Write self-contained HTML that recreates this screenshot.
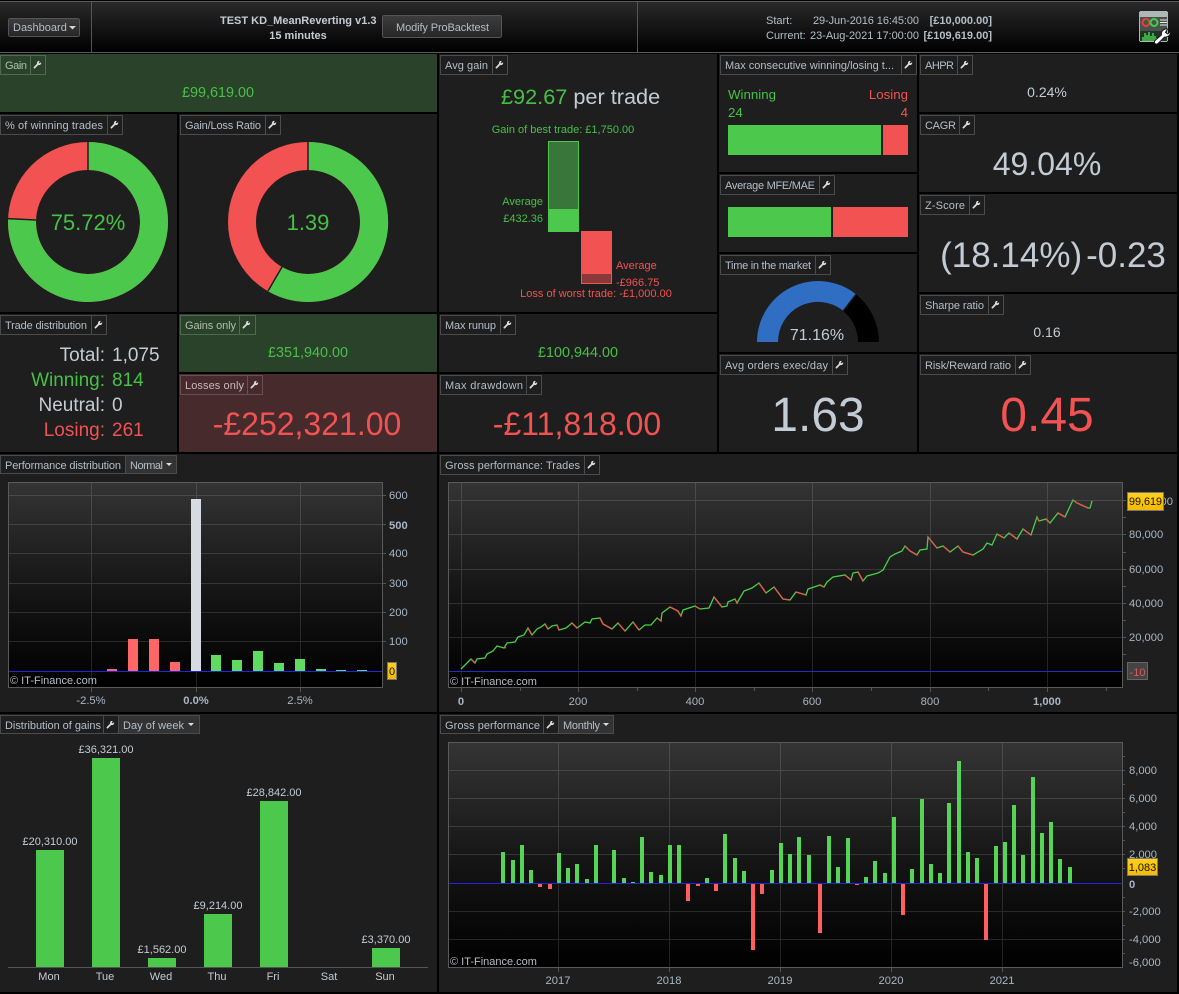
<!DOCTYPE html>
<html><head><meta charset="utf-8"><title>ProBacktest Dashboard</title>
<style>
html,body{margin:0;padding:0;background:#000;width:1179px;height:994px;overflow:hidden}
svg{display:block;font-family:"Liberation Sans",Arial,sans-serif}
.t{font-size:11px;fill:#b4bec8}
.tg{font-size:11px;fill:#aebfae}
.tr{font-size:11px;fill:#c8b8b8}
.ax{font-size:11.2px;fill:#a9b6c4}
.g{fill:#46c146}.r{fill:#f25252}.w{fill:#c3ccd4}
.m{text-anchor:middle}.e{text-anchor:end}
.tb{fill:none;stroke:#4b4b4b}
.tbg{fill:none;stroke:#4f6b4f}
.tbr{fill:none;stroke:#6a4e50}
.gl{stroke:rgba(255,255,255,.13);stroke-width:1;shape-rendering:crispEdges}
.pb{fill:url(#plot);stroke:#5a5a5a;shape-rendering:crispEdges}
.tick{stroke:#555;shape-rendering:crispEdges}
rect{shape-rendering:crispEdges}
</style></head><body>
<svg width="1179" height="994" viewBox="0 0 1179 994" xmlns="http://www.w3.org/2000/svg">
<defs>
<linearGradient id="hd" x1="0" y1="0" x2="0" y2="1"><stop offset="0" stop-color="#2a2a2a"/><stop offset="1" stop-color="#000"/></linearGradient>
<linearGradient id="plot" x1="0" y1="0" x2="0" y2="1"><stop offset="0" stop-color="#343434"/><stop offset=".55" stop-color="#141414"/><stop offset="1" stop-color="#000"/></linearGradient>
<linearGradient id="btn" x1="0" y1="0" x2="0" y2="1"><stop offset="0" stop-color="#3d3d3d"/><stop offset="1" stop-color="#262626"/></linearGradient>
<linearGradient id="ylw" x1="0" y1="0" x2="0" y2="1"><stop offset="0" stop-color="#ffd21a"/><stop offset="1" stop-color="#f5b800"/></linearGradient>
<symbol id="wr" viewBox="0 -3 15 15" overflow="visible"><path d="M11 2.600 L9.200 4.300 L7.700 3 L9.400 1.100 A3.100 3.100 0 0 0 5.400 4.900 L1.100 9.200 A1.100 1.100 0 0 0 2.800 10.900 L7.100 6.600 A3.100 3.100 0 0 0 11 2.600 Z" fill="#dcdcdc"/></symbol>
</defs>

<rect width="1179" height="994" fill="#000"/>
<!-- header -->
<rect y="1" width="1179" height="51" fill="url(#hd)"/>
<rect y="1" width="1179" height="1" fill="#5c5c5c"/>
<rect y="52" width="1179" height="1" fill="#5c5c5c"/>
<rect x="91" y="2" width="1" height="50" fill="#555"/>
<rect x="637" y="2" width="1" height="50" fill="#555"/>
<rect x="8.500" y="18.500" width="71" height="18" rx="2" fill="url(#btn)" stroke="#555"/>
<text x="13" y="31" class="t">Dashboard</text>
<path d="M69 26h7l-3.500 3.500z" fill="#d5d5d5"/>
<text x="220" y="24" font-size="11" font-weight="bold" fill="#c3ccd4">TEST KD_MeanReverting v1.3</text>
<text x="298" y="39" font-size="11" font-weight="bold" fill="#c3ccd4" class="m">15 minutes</text>
<rect x="382.500" y="15.500" width="119" height="22" rx="2" fill="url(#btn)" stroke="#555"/>
<text x="396" y="31" class="t" textLength="93" lengthAdjust="spacing">Modify ProBacktest</text>
<text x="766" y="24" class="t">Start:</text>
<text x="813" y="24" class="t" textLength="106" lengthAdjust="spacing">29-Jun-2016 16:45:00</text>
<text x="992" y="24" class="t e" font-weight="bold">[£10,000.00]</text>
<text x="766" y="39" class="t">Current:</text>
<text x="810" y="39" class="t" textLength="109" lengthAdjust="spacing">23-Aug-2021 17:00:00</text>
<text x="992" y="39" class="t e" font-weight="bold">[£109,619.00]</text>
<!-- header icon -->
<rect x="1139" y="11" width="29" height="31" rx="2" fill="#aeb6b6"/>
<rect x="1140" y="17" width="27" height="24" fill="#4a524e"/>
<rect x="1140" y="31" width="27" height="10" fill="#22352a"/>
<circle cx="1146" cy="22.500" r="3.500" fill="none" stroke="#e6403c" stroke-width="2"/>
<circle cx="1154" cy="22.500" r="3.500" fill="none" stroke="#3fd04a" stroke-width="2"/>
<path d="M1160 20h7M1160 22.500h7M1160 25h7" stroke="#e6ebeb"/>
<path d="M1143 41v-4M1145 41v-8M1147 41v-6M1149 41v-9M1151 41v-5M1153 41v-8M1155 41v-5M1157 41v-3" stroke="#46d04a" stroke-width="1.500"/>
<path d="M1170.500 31.500 L1167.800 34 L1165.500 32.500 L1167.500 29 A5 5 0 0 0 1161.500 35 L1155 40.500 A2 2 0 0 0 1158 43.500 L1164.500 37 A5 5 0 0 0 1170.500 31.500 Z" fill="#fff" stroke="#1a1a1a"/>

<!-- panels -->
<g fill="#1e1e1e">
<rect x="0" y="54" width="437" height="58" fill="#2a412a"/>
<rect x="0" y="114" width="177" height="198"/>
<rect x="179" y="114" width="258" height="198"/>
<rect x="439" y="54" width="278" height="258"/>
<rect x="719" y="54" width="198" height="118"/>
<rect x="919" y="54" width="258" height="58"/>
<rect x="919" y="114" width="258" height="78"/>
<rect x="919" y="194" width="258" height="98"/>
<rect x="919" y="294" width="258" height="58"/>
<rect x="719" y="174" width="198" height="78"/>
<rect x="719" y="254" width="198" height="98"/>
<rect x="719" y="354" width="198" height="98"/>
<rect x="919" y="354" width="258" height="98"/>
<rect x="0" y="314" width="177" height="138"/>
<rect x="179" y="314" width="258" height="58" fill="#2a412a"/>
<rect x="179" y="374" width="258" height="78" fill="#462a2c"/>
<rect x="439" y="314" width="278" height="58"/>
<rect x="439" y="374" width="278" height="78"/>
<rect x="0" y="454" width="437" height="258"/>
<rect x="439" y="454" width="738" height="258"/>
<rect x="0" y="714" width="437" height="278"/>
<rect x="439" y="714" width="738" height="278"/>
</g>

<!-- tabs -->
<g>
<path class="tbg" d="M.5 55.500H45.500V74.500H.5ZM30.500 55V74"/><text x="5" y="69" class="tg" textLength="22" lengthAdjust="spacing">Gain</text><use href="#wr" x="33" y="58" width="11" height="11"/>
<path class="tb" d="M.5 115.500H122.500V134.500H.5ZM107.500 115V134"/><text x="5" y="129" class="t" textLength="98" lengthAdjust="spacing">% of winning trades</text><use href="#wr" x="110" y="118" width="11" height="11"/>
<path class="tb" d="M180.500 115.500H280.500V134.500H180.500ZM265.500 115V134"/><text x="185" y="129" class="t" textLength="76" lengthAdjust="spacing">Gain/Loss Ratio</text><use href="#wr" x="268" y="118" width="11" height="11"/>
<path class="tb" d="M440.500 55.500H507.500V74.500H440.500ZM492.500 55V74"/><text x="445" y="69" class="t" textLength="43" lengthAdjust="spacing">Avg gain</text><use href="#wr" x="495" y="58" width="11" height="11"/>
<path class="tb" d="M720.500 55.500H916.500V74.500H720.500ZM901.500 55V74"/><text x="725" y="69" class="t" textLength="169" lengthAdjust="spacing">Max consecutive winning/losing t...</text><use href="#wr" x="904" y="58" width="11" height="11"/>
<path class="tb" d="M920.500 55.500H972.500V74.500H920.500ZM957.500 55V74"/><text x="925" y="69" class="t" textLength="29" lengthAdjust="spacing">AHPR</text><use href="#wr" x="960" y="58" width="11" height="11"/>
<path class="tb" d="M920.500 115.500H974.500V134.500H920.500ZM959.500 115V134"/><text x="925" y="129" class="t" textLength="31" lengthAdjust="spacing">CAGR</text><use href="#wr" x="962" y="118" width="11" height="11"/>
<path class="tb" d="M920.500 195.500H984.500V214.500H920.500ZM969.500 195V214"/><text x="925" y="209" class="t" textLength="40" lengthAdjust="spacing">Z-Score</text><use href="#wr" x="972" y="198" width="11" height="11"/>
<path class="tb" d="M920.500 295.500H1003.500V314.500H920.500ZM988.500 295V314"/><text x="925" y="309" class="t" textLength="59" lengthAdjust="spacing">Sharpe ratio</text><use href="#wr" x="991" y="298" width="11" height="11"/>
<path class="tb" d="M720.500 175.500H834.500V194.500H720.500ZM819.500 175V194"/><text x="725" y="189" class="t" textLength="90" lengthAdjust="spacing">Average MFE/MAE</text><use href="#wr" x="822" y="178" width="11" height="11"/>
<path class="tb" d="M720.500 255.500H830.500V274.500H720.500ZM815.500 255V274"/><text x="725" y="269" class="t" textLength="86" lengthAdjust="spacing">Time in the market</text><use href="#wr" x="818" y="258" width="11" height="11"/>
<path class="tb" d="M720.500 355.500H847.500V374.500H720.500ZM832.500 355V374"/><text x="725" y="369" class="t" textLength="103" lengthAdjust="spacing">Avg orders exec/day</text><use href="#wr" x="835" y="358" width="11" height="11"/>
<path class="tb" d="M920.500 355.500H1030.500V374.500H920.500ZM1015.500 355V374"/><text x="925" y="369" class="t" textLength="86" lengthAdjust="spacing">Risk/Reward ratio</text><use href="#wr" x="1018" y="358" width="11" height="11"/>
<path class="tb" d="M.5 315.500H106.500V334.500H.5ZM91.500 315V334"/><text x="5" y="329" class="t" textLength="82" lengthAdjust="spacing">Trade distribution</text><use href="#wr" x="94" y="318" width="11" height="11"/>
<path class="tbg" d="M180.500 315.500H255.500V334.500H180.500ZM239.500 315V334"/><text x="185" y="329" class="tg" textLength="51" lengthAdjust="spacing">Gains only</text><use href="#wr" x="242" y="318" width="11" height="11"/>
<path class="tbr" d="M180.500 375.500H262.500V394.500H180.500ZM247.500 375V394"/><text x="185" y="389" class="tr" textLength="59" lengthAdjust="spacing">Losses only</text><use href="#wr" x="250" y="378" width="11" height="11"/>
<path class="tb" d="M440.500 315.500H515.500V334.500H440.500ZM500.500 315V334"/><text x="445" y="329" class="t" textLength="51" lengthAdjust="spacing">Max runup</text><use href="#wr" x="503" y="318" width="11" height="11"/>
<path class="tb" d="M440.500 375.500H541.500V394.500H440.500ZM526.500 375V394"/><text x="445" y="389" class="t" textLength="78" lengthAdjust="spacing">Max drawdown</text><use href="#wr" x="529" y="378" width="11" height="11"/>
<rect x="125" y="455" width="51" height="19" fill="#333"/>
<path class="tb" d="M.5 455.500H176.500V473.500H.5ZM125.500 455V474"/><text x="5" y="469" class="t" textLength="116" lengthAdjust="spacing">Performance distribution</text><text x="130" y="469" class="t" textLength="33" lengthAdjust="spacing">Normal</text><path d="M166 463h6l-3 3z" fill="#ddd"/>
<path class="tb" d="M440.500 455.500H599.500V474.500H440.500ZM584.500 455V474"/><text x="445" y="469" class="t" textLength="135" lengthAdjust="spacing">Gross performance: Trades</text><use href="#wr" x="587" y="458" width="11" height="11"/>
<rect x="118" y="715" width="81" height="19" fill="#333"/>
<path class="tb" d="M.5 715.500H199.500V733.500H.5ZM103.500 715V734M118.500 715V734"/><text x="5" y="729" class="t" textLength="96" lengthAdjust="spacing">Distribution of gains</text><use href="#wr" x="106" y="718" width="11" height="11"/><text x="123" y="729" class="t" textLength="61" lengthAdjust="spacing">Day of week</text><path d="M188 723h6l-3 3z" fill="#ddd"/>
<rect x="559" y="715" width="54" height="19" fill="#333"/>
<path class="tb" d="M440.500 715.500H613.500V733.500H440.500ZM543.500 715V734M558.500 715V734"/><text x="445" y="729" class="t" textLength="95" lengthAdjust="spacing">Gross performance</text><use href="#wr" x="546" y="718" width="11" height="11"/><text x="563" y="729" class="t" textLength="37" lengthAdjust="spacing">Monthly</text><path d="M603 723h6l-3 3z" fill="#ddd"/>
</g>

<!-- values -->
<text x="218" y="97" font-size="14.400" class="g m">£99,619.00</text>
<text x="501" y="104" font-size="21.700" class="g">£92.67<tspan class="w"> per trade</tspan></text>
<text x="1047" y="97" font-size="14" class="w m">0.24%</text>
<text x="1047" y="175" font-size="32" class="w m">49.04%</text>
<text x="1053" y="267" font-size="35" class="w m">(18.14%)<tspan dx="4">-0.23</tspan></text>
<text x="1047" y="337" font-size="14" class="w m">0.16</text>
<text x="818" y="431" font-size="48" class="w m">1.63</text>
<text x="1047" y="431" font-size="48" class="r m">0.45</text>
<text x="308" y="357" font-size="14.400" class="g m">£351,940.00</text>
<text x="307" y="435" font-size="32" class="r m">-£252,321.00</text>
<text x="578" y="357" font-size="14.400" class="g m">£100,944.00</text>
<text x="577" y="435" font-size="32" class="r m">-£11,818.00</text>

<!-- max consecutive -->
<text x="728" y="99" font-size="13.300" class="g">Winning</text>
<text x="908" y="99" font-size="13.300" class="r e">Losing</text>
<text x="728" y="117" font-size="13.300" class="g">24</text>
<text x="908" y="117" font-size="13.300" class="r e">4</text>
<rect x="728" y="125" width="153" height="30" fill="#4cc94c"/>
<rect x="883" y="125" width="25" height="30" fill="#f25252"/>
<!-- MFE -->
<rect x="728" y="207" width="103" height="30" fill="#4cc94c"/>
<rect x="833" y="207" width="75" height="30" fill="#f25252"/>

<!-- avg gain bars -->
<text x="563" y="133" font-size="11" class="g m">Gain of best trade: £1,750.00</text>
<rect x="548" y="141" width="31" height="91" fill="#4cc94c"/>
<rect x="549" y="142" width="29" height="67" fill="#38763a"/>
<text x="543" y="205" font-size="11" class="g e">Average</text>
<text x="543" y="222" font-size="11" class="g e">£432.36</text>
<rect x="581" y="231" width="31" height="53" fill="#f25252"/>
<rect x="582" y="274" width="29" height="9" fill="#8a3939"/>
<text x="616" y="269" font-size="11" class="r">Average</text>
<text x="616" y="286" font-size="11" class="r">-£966.75</text>
<text x="596" y="297" font-size="11" class="r m">Loss of worst trade: -£1,000.00</text>

<!-- donuts -->
<g fill="none">
<circle cx="88" cy="222" r="66" stroke="#f25252" stroke-width="28"/>
<path d="M88 156 A66 66 0 1 1 22.100 219" stroke="#4cc94c" stroke-width="28"/>
<path d="M88 141V171M8 218.600L36 220" stroke="#1e1e1e" stroke-width="1.500"/>
<circle cx="308" cy="222" r="66" stroke="#f25252" stroke-width="28"/>
<path d="M308 156 A66 66 0 1 1 274.900 279" stroke="#4cc94c" stroke-width="28"/>
<path d="M308 141V171M282 267L268 291" stroke="#1e1e1e" stroke-width="1.500"/>
</g>
<text x="88" y="230" font-size="22" class="g m">75.72%</text>
<text x="308" y="230" font-size="22" class="g m">1.39</text>

<!-- gauge -->
<path d="M757 342 A61 61 0 0 1 855.500 293.900 L842.700 310.400 A40 40 0 0 0 778 342 Z" fill="#2f6ec3"/>
<path d="M856.300 294.600 A61 61 0 0 1 879 342 H858 A40 40 0 0 0 843.500 311.200 Z" fill="#000"/>
<text x="817" y="340" font-size="16" class="w m">71.16%</text>

<!-- trade distribution -->
<g font-size="19">
<text x="105" y="361" class="w e">Total:</text><text x="112" y="361" class="w">1,075</text>
<text x="105" y="386" class="g e">Winning:</text><text x="112" y="386" class="g">814</text>
<text x="105" y="411" class="w e">Neutral:</text><text x="112" y="411" class="w">0</text>
<text x="105" y="436" class="r e">Losing:</text><text x="112" y="436" class="r">261</text>
</g>

<!-- performance distribution chart -->
<rect class="pb" x="8.500" y="482.500" width="374" height="205"/>
<path class="gl" d="M9 495.500H382M9 524.500H382M9 553.500H382M9 583.500H382M9 612.500H382M9 641.500H382M91.500 483V687M196.500 483V687M300.500 483V687"/>
<path class="tick" d="M91.500 687V692M196.500 687V692M300.500 687V692M383 495.500H386M383 524.500H386M383 553.500H386M383 583.500H386M383 612.500H386M383 641.500H386"/>
<g fill="#ff6666">
<rect x="107" y="669" width="10" height="2"/><rect x="128" y="639" width="10" height="32"/><rect x="149" y="639" width="10" height="32"/><rect x="170" y="662" width="10" height="9"/>
</g>
<rect x="191" y="499" width="10" height="172" fill="#d6dbe1"/>
<g fill="#5fdc5f">
<rect x="211" y="655" width="10" height="16"/><rect x="232" y="660" width="10" height="11"/><rect x="253" y="651" width="10" height="20"/><rect x="274" y="663" width="10" height="8"/><rect x="295" y="659" width="10" height="12"/><rect x="316" y="669" width="10" height="2"/><rect x="336" y="670" width="10" height="1"/><rect x="357" y="670" width="10" height="1"/>
</g>
<rect x="9" y="671" width="373" height="1" fill="#2424e0"/>
<text x="10" y="684" font-size="11" fill="#b8bfc6">© IT-Finance.com</text>
<g class="ax"><text x="389" y="499">600</text><text x="389" y="529" font-weight="bold">500</text><text x="389" y="557">400</text><text x="389" y="587">300</text><text x="389" y="616">200</text><text x="389" y="645">100</text>
<text x="91" y="704" class="m">-2.5%</text><text x="196" y="704" class="m" font-weight="bold">0.0%</text><text x="300" y="704" class="m">2.5%</text></g>
<rect x="387.500" y="662.500" width="9" height="17" fill="url(#ylw)" stroke="#777"/>
<text x="392" y="675" font-size="11" fill="#111" class="m">0</text>

<!-- gross perf trades chart -->
<rect class="pb" x="448.500" y="482.500" width="674" height="205"/>
<path class="gl" d="M449 500.500H1122M449 534.500H1122M449 569.500H1122M449 603.500H1122M449 637.500H1122M461.500 483V687M578.500 483V687M695.500 483V687M812.500 483V687M930.500 483V687M1047.500 483V687"/>
<path class="tick" d="M461.500 687V692M520.500 687V691M578.500 687V692M637.500 687V691M695.500 687V692M754.500 687V691M812.500 687V692M871.500 687V691M930.500 687V692M988.500 687V691M1047.500 687V692M1106.500 687V691M1123 500.500H1126M1123 517.500H1126M1123 534.500H1126M1123 552.500H1126M1123 569.500H1126M1123 586.500H1126M1123 603.500H1126M1123 620.500H1126M1123 637.500H1126M1123 654.500H1126"/>
<rect x="449" y="671" width="673" height="1" fill="#2828c8"/>
<polyline fill="none" stroke="#46d046" stroke-width="1.300" points="461,669 465,665 468,662 471,659 475,663 477,659 485,658 487,654 493,651 497,646 504,648 507,643 515,642 518,637 524,635 528,628 532,635 537,629 541,627 545,624 548,629 552,626 557,625 559,630 566,628 572,623 577,628 585,622 590,623 592,619 600,618 603,624 612,629 618,623 625,631 633,622 639,630 645,625 651,625 657,618 661,621 662,613 670,607 678,611 681,616 683,610 695,606 700,609 709,608 714,597 722,607 727,606 728,602 735,599 737,603 744,591 752,588 759,583 766,593 774,587 783,599 790,600 796,592 806,595 808,589 820,585 824,587 827,582 833,577 845,575 851,580 853,573 858,572 863,581 867,576 878,573 883,570 890,557 895,554 902,551 905,546 910,551 917,555 920,550 927,549 928,537 937,548 943,546 950,552 958,546 963,552 973,555 983,549 987,543 992,545 997,534 1004,538 1009,533 1017,539 1023,529 1031,535 1037,517 1039,521 1046,519 1050,523 1058,513 1065,517 1073,500 1077,503 1088,508 1090,508 1092,501"/>
<path fill="none" stroke="#e8584c" stroke-width="1.300" d="M471 659L475 663M504 647L506 648M528 628L532 635M545 624L548 629M557 625L559 630M572 623L577 628M600 618L603 624L612 629M618 623L625 631M633 622L639 630M657 618L661 621M670 607L678 611L681 616M695 606L700 609M714 597L722 607M735 599L737 603M759 583L766 593M774 587L783 599L790 600M796 592L806 595M820 585L824 587M845 575L851 580M858 572L863 581M905 546L910 551L917 555M928 537L937 548M943 546L950 552M958 546L963 552L973 555M997 534L1004 538M1009 533L1017 539M1023 529L1031 535M1037 517L1039 521M1046 519L1050 523M1058 513L1065 517M1073 500L1077 503L1088 508"/>
<text x="450" y="685" font-size="11" fill="#b8bfc6">© IT-Finance.com</text>
<g class="ax">
<text x="1173" y="505" text-anchor="end">00</text>
<text x="1129" y="538">80,000</text><text x="1129" y="573">60,000</text><text x="1129" y="607">40,000</text><text x="1129" y="641">20,000</text>
<text x="461" y="705" class="m" font-weight="bold">0</text><text x="578" y="705" class="m">200</text><text x="695" y="705" class="m">400</text><text x="812" y="705" class="m">600</text><text x="930" y="705" class="m">800</text><text x="1047" y="705" class="m" font-weight="bold">1,000</text>
</g>
<rect x="1127.500" y="492.500" width="36" height="18" fill="url(#ylw)" stroke="#777"/>
<text x="1145.500" y="505" font-size="10.800" fill="#111" class="m">99,619</text>
<rect x="1127.500" y="662.500" width="20" height="17" fill="#444" stroke="#666"/>
<text x="1137.500" y="676" font-size="11" fill="#d85a5a" class="m">-10</text>

<!-- distribution of gains -->
<g fill="#4cc94c">
<rect x="36" y="850" width="28" height="117"/><rect x="92" y="758" width="28" height="209"/><rect x="148" y="958" width="28" height="9"/><rect x="204" y="914" width="28" height="53"/><rect x="260" y="801" width="28" height="166"/><rect x="372" y="948" width="28" height="19"/>
</g>
<rect x="8" y="967" width="420" height="1" fill="#555"/>
<g font-size="11" fill="#c3ccd4" class="m">
<text x="50" y="753" display="none"></text>
<text x="50" y="845">£20,310.00</text><text x="106" y="753">£36,321.00</text><text x="162" y="953">£1,562.00</text><text x="218" y="909">£9,214.00</text><text x="274" y="796">£28,842.00</text><text x="386" y="943">£3,370.00</text>
<text x="49" y="980">Mon</text><text x="105" y="980">Tue</text><text x="161" y="980">Wed</text><text x="217" y="980">Thu</text><text x="273" y="980">Fri</text><text x="329" y="980">Sat</text><text x="385" y="980">Sun</text>
</g>

<!-- gross performance monthly -->
<rect class="pb" x="448.500" y="742.500" width="674" height="225"/>
<path class="gl" d="M449 770.500H1122M449 798.500H1122M449 826.500H1122M449 854.500H1122M449 911.500H1122M449 939.500H1122M558.500 743V967M669.500 743V967M780.500 743V967M891.500 743V967M1002.500 743V967"/>
<path class="tick" d="M558.500 967V972M669.500 967V972M780.500 967V972M891.500 967V972M1002.500 967V972M1123 756.500H1125M1123 770.500H1125M1123 784.500H1125M1123 798.500H1125M1123 812.500H1125M1123 826.500H1125M1123 840.500H1125M1123 854.500H1125M1123 868.500H1125M1123 897.500H1125M1123 911.500H1125M1123 925.500H1125M1123 939.500H1125M1123 953.500H1125"/>
<g fill="#55d455">
<rect x="501" y="852" width="4" height="32"/><rect x="511" y="860" width="4" height="24"/><rect x="520" y="845" width="4" height="39"/><rect x="529" y="870" width="4" height="14"/><rect x="557" y="853" width="4" height="31"/><rect x="566" y="868" width="4" height="16"/><rect x="575" y="864" width="4" height="20"/><rect x="585" y="879" width="4" height="5"/><rect x="594" y="845" width="4" height="39"/><rect x="603" y="883" width="4" height="1"/><rect x="612" y="850" width="4" height="34"/><rect x="622" y="878" width="4" height="6"/><rect x="631" y="882" width="4" height="2"/><rect x="640" y="837" width="4" height="47"/><rect x="649" y="872" width="4" height="12"/><rect x="659" y="875" width="4" height="9"/><rect x="668" y="845" width="4" height="39"/><rect x="677" y="845" width="4" height="39"/><rect x="705" y="878" width="4" height="6"/><rect x="723" y="834" width="4" height="50"/><rect x="733" y="858" width="4" height="26"/><rect x="742" y="871" width="4" height="13"/><rect x="770" y="870" width="4" height="14"/><rect x="779" y="843" width="4" height="41"/><rect x="788" y="854" width="4" height="30"/><rect x="797" y="837" width="4" height="47"/><rect x="807" y="855" width="4" height="29"/><rect x="827" y="836" width="4" height="48"/><rect x="836" y="867" width="4" height="17"/><rect x="846" y="838" width="4" height="46"/><rect x="864" y="877" width="4" height="7"/><rect x="873" y="861" width="4" height="23"/><rect x="883" y="873" width="4" height="11"/><rect x="892" y="817" width="4" height="67"/><rect x="910" y="869" width="4" height="15"/><rect x="920" y="799" width="4" height="85"/><rect x="929" y="864" width="4" height="20"/><rect x="938" y="873" width="4" height="11"/><rect x="947" y="803" width="4" height="81"/><rect x="957" y="761" width="4" height="123"/><rect x="966" y="852" width="4" height="32"/><rect x="975" y="858" width="4" height="26"/><rect x="994" y="846" width="4" height="38"/><rect x="1003" y="842" width="4" height="42"/><rect x="1012" y="805" width="4" height="79"/><rect x="1021" y="855" width="4" height="29"/><rect x="1031" y="777" width="4" height="107"/><rect x="1040" y="833" width="4" height="51"/><rect x="1049" y="822" width="4" height="62"/><rect x="1058" y="859" width="4" height="25"/><rect x="1068" y="867" width="4" height="17"/>
</g>
<g fill="#ff5f5f">
<rect x="538" y="884" width="4" height="3"/><rect x="548" y="884" width="4" height="5"/><rect x="686" y="884" width="4" height="17"/><rect x="696" y="884" width="4" height="2"/><rect x="714" y="884" width="4" height="7"/><rect x="751" y="884" width="4" height="66"/><rect x="760" y="884" width="4" height="10"/><rect x="818" y="884" width="4" height="49"/><rect x="855" y="884" width="4" height="1"/><rect x="901" y="884" width="4" height="31"/><rect x="984" y="884" width="4" height="56"/>
</g>
<rect x="449" y="883" width="673" height="1" fill="#2424e0"/>
<text x="450" y="965" font-size="11" fill="#b8bfc6">© IT-Finance.com</text>
<g class="ax">
<text x="1129" y="774">8,000</text><text x="1129" y="802">6,000</text><text x="1129" y="830">4,000</text><text x="1129" y="858">2,000</text><text x="1129" y="888" font-weight="bold">0</text><text x="1129" y="915">-2,000</text><text x="1129" y="943">-4,000</text><text x="1129" y="966">-6,000</text>
<text x="558" y="984" class="m">2017</text><text x="669" y="984" class="m">2018</text><text x="780" y="984" class="m">2019</text><text x="891" y="984" class="m">2020</text><text x="1002" y="984" class="m">2021</text>
</g>
<rect x="1127.500" y="858.500" width="30" height="17" fill="url(#ylw)" stroke="#777"/>
<text x="1142.500" y="871" font-size="11" fill="#111" class="m">1,083</text>
</svg>
</body></html>
